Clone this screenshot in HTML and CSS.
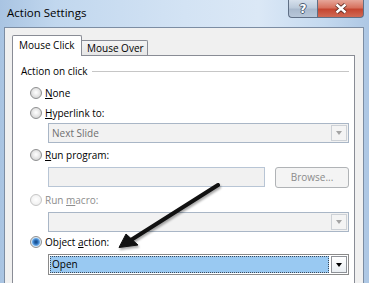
FILE: index.html
```html
<!DOCTYPE html>
<html>
<head>
<meta charset="utf-8">
<link rel="stylesheet" href="styles.css">
</head>
<body>
<div class="window">
  <div class="titlebar">
    <span class="title">Action Settings</span>
    <div class="caption-btns">
      <div class="cbtn help"><span class="help-glyph">?</span></div>
      <div class="cbtn close">
        <svg width="14" height="11" viewBox="0 0 14 11"><path d="M2.5 1.5 L11.5 9.5 M11.5 1.5 L2.5 9.5" stroke="#5b2a22" stroke-width="4.2" fill="none"/><path d="M2.5 1.5 L11.5 9.5 M11.5 1.5 L2.5 9.5" stroke="#fff" stroke-width="2.4" fill="none"/></svg>
      </div>
    </div>
  </div>
  <div class="client">
    <div class="tabs">
      <div class="tab tab-active">Mouse Click</div>
      <div class="tab tab-inactive">Mouse Over</div>
    </div>
    <div class="panel">
      <div class="group">
        <div class="group-head"><span class="group-label">Action on click</span><div class="rule"></div></div>
        <div class="row first"><span class="radio"></span><span><u>N</u>one</span></div>
        <div class="row"><span class="radio"></span><span><u>H</u>yperlink to:</span></div>
        <div class="field combo disabled"><span class="combo-text">Next Slide</span><span class="combo-btn"><span class="tri"></span></span></div>
        <div class="row gap"><span class="radio"></span><span><u>R</u>un program:</span></div>
        <div class="field field-row gap">
          <div class="textbox"></div>
          <div class="button">Browse...</div>
        </div>
        <div class="row gap dim"><span class="radio radio-disabled"></span><span>Run <u>m</u>acro:</span></div>
        <div class="field combo disabled gap"><span class="combo-text"></span><span class="combo-btn"><span class="tri"></span></span></div>
        <div class="row"><span class="radio radio-checked"></span><span>Object <u>a</u>ction:</span></div>
        <div class="field combo active gap"><span class="combo-text"><span class="focus">Open</span></span><span class="combo-btn"><span class="tri"></span></span></div>
      </div>
    </div>
  </div>
  <svg class="arrow" width="369" height="283" viewBox="0 0 369 283">
    <path d="M218 185 L131 240" stroke="#111" stroke-width="4" stroke-linecap="round" fill="none"/>
    <polygon points="119,247.5 126,234 138,245" fill="#111" stroke="#111" stroke-width="1" stroke-linejoin="round"/>
  </svg>
</div>
</body>
</html>
```

FILE: styles.css
```css
body {
  margin: 0;
  font-family: "Open Sans", "Noto Sans", sans-serif;
  font-size: 10px;
  color: #000;
}

.window {
  width: 369px;
  height: 283px;
  overflow: hidden;
  position: relative;
  display: flex;
  flex-direction: column;
  background: linear-gradient(90deg, #a9c4e2 0%, #c1d7ee 15%, #d3e3f4 50%, #dbe8f6 70%, #c4d9ef 88%, #adc7e4 100%);
}

.titlebar {
  height: 27px;
  flex: none;
  display: flex;
  justify-content: space-between;
  align-items: flex-start;
}

.title {
  padding-left: 7px;
  line-height: 26px;
  font-size: 11.5px;
}

.caption-btns {
  display: flex;
  margin-right: 5px;
}

.cbtn {
  height: 18px;
  box-sizing: border-box;
  border: 1px solid #5f6f85;
  border-top: none;
  display: flex;
  align-items: center;
  justify-content: center;
}

.help {
  width: 29px;
  border-right: none;
  border-radius: 0 0 0 4px;
  background: linear-gradient(#d6e0ec, #bccadb 45%, #a9b9cd 55%, #b7c6d8);
}

.help-glyph {
  font-family: "DejaVu Sans", sans-serif;
  font-weight: bold;
  font-size: 12px;
  line-height: 12px;
  color: #fff;
  text-shadow: 1px 0 0 #4d5d74, -1px 0 0 #4d5d74, 0 1px 0 #4d5d74, 0 -1px 0 #4d5d74;
}

.close {
  width: 47px;
  border-radius: 0 0 4px 0;
  background: linear-gradient(#e6a699, #d7725f 45%, #c54631 55%, #d06a55);
}

.client {
  flex: 1;
  margin: 0 5px 0 4px;
  border: 1px solid #7c8da3;
  border-bottom: none;
  background: #f0f0f0;
  padding: 7px 8px 0 7px;
  display: flex;
  flex-direction: column;
}

.tabs {
  display: flex;
  align-items: flex-end;
  height: 20px;
  flex: none;
}

.tab {
  box-sizing: border-box;
  border: 1px solid #898c95;
  border-bottom: none;
  white-space: nowrap;
}

.tab-active {
  width: 70px;
  height: 21px;
  margin-bottom: -1px;
  background: #fff;
  position: relative;
  z-index: 1;
  padding-left: 6px;
  line-height: 19px;
  border-radius: 2px 2px 0 0;
}

.tab-inactive {
  width: 66px;
  height: 15px;
  border-left: none;
  background: linear-gradient(#f4f4f4, #e6e6e6);
  padding-left: 5px;
  line-height: 14px;
  border-radius: 0 2px 0 0;
}

.panel {
  flex: 1;
  background: #fff;
  border: 1px solid #898c95;
  border-bottom: none;
  padding: 7px 5px 0 4px;
}

.group-head {
  display: flex;
  align-items: center;
  height: 16px;
}

.group-label {
  margin-left: 4px;
}

.rule {
  flex: 1;
  height: 1px;
  background: #c6c6c6;
  margin-left: 4px;
}

.row {
  display: flex;
  align-items: center;
  height: 20px;
  padding-left: 13px;
}

.row.first {
  margin-top: 4px;
}

.gap {
  margin-top: 2px;
}

.dim {
  color: #8d8d8d;
}

u {
  text-decoration: underline;
  text-underline-offset: 1px;
}

.radio {
  width: 12px;
  height: 12px;
  box-sizing: border-box;
  border-radius: 50%;
  margin-right: 3px;
  flex: none;
  border: 1px solid #8f9091;
  background: radial-gradient(circle at 50% 45%, #ffffff 0, #eeeeee 35%, #d6d6d6 75%, #c4c4c4 100%);
}

.radio-disabled {
  border-color: #c6c6c6;
  background: radial-gradient(circle at 50% 45%, #ffffff 0, #f5f5f5 50%, #e6e6e6 100%);
}

.radio-checked {
  background: radial-gradient(circle at 50% 50%, #12457e 0, #2a6cb6 2px, #67a8e6 3.5px, #d6e8f7 4.5px, #e4e4e4 5px);
}

.field {
  margin-left: 31px;
}

.combo {
  display: flex;
  box-sizing: border-box;
  height: 20px;
  border: 1px solid #a9b6c6;
}

.combo-text {
  flex: 1;
  padding-left: 3px;
  line-height: 18px;
  display: flex;
  align-items: center;
}

.combo.disabled {
  background: #f2f2f2;
}

.combo.disabled .combo-text {
  color: #6f6f6f;
}

.combo-btn {
  width: 16px;
  margin: 1px;
  box-sizing: border-box;
  border: 1px solid #cdd1d6;
  background: #f4f4f4;
  display: flex;
  align-items: center;
  justify-content: center;
}

.tri {
  width: 0;
  height: 0;
  border-left: 3.5px solid transparent;
  border-right: 3.5px solid transparent;
  border-top: 4px solid #a4a4a4;
}

.combo.active {
  height: 21px;
  border-color: #8a8a8a;
  background: #fff;
}

.combo.active .combo-text {
  padding: 1px;
}

.focus {
  flex: 1;
  align-self: stretch;
  background: #99c9f2;
  border: 1px dotted #3c4a5a;
  padding-left: 1px;
  line-height: 15px;
}

.combo.active .combo-btn {
  border-color: #8e9298;
  background: linear-gradient(#ffffff, #e9eef2);
}

.combo.active .tri {
  border-top-color: #000;
}

.field-row {
  display: flex;
  justify-content: space-between;
  align-items: flex-start;
  height: 21px;
}

.textbox {
  width: 217px;
  height: 20px;
  box-sizing: border-box;
  border: 1px solid #b8c5d5;
  background: #f1f1f1;
}

.button {
  width: 74px;
  height: 21px;
  box-sizing: border-box;
  border: 1px solid #b0b3b6;
  border-radius: 3px;
  background: #f4f4f4;
  color: #8b8b8b;
  text-align: center;
  line-height: 19px;
}

.arrow {
  position: absolute;
  left: 0;
  top: 0;
  pointer-events: none;
  filter: drop-shadow(1px 2px 1px rgba(0, 0, 0, 0.35));
}
```
